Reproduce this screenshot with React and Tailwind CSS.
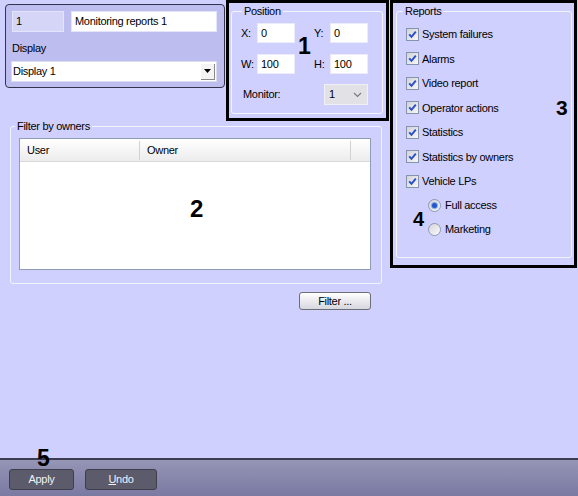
import React from 'react';

// XP-style check box with a blue tick
const CheckBox = () => (
  <span className="w-[13px] h-[13px] shrink-0 border border-[#8594ad] bg-linear-to-br from-[#d2d2da] to-[#f7f7f7] flex items-center justify-center">
    <svg width="9" height="9" viewBox="0 0 9 9">
      <path d="M1.2 4.3 L3.5 6.8 L7.8 1.6" fill="none" stroke="#2b4ec6" strokeWidth="1.9" />
    </svg>
  </span>
);

const Radio = ({ on }) => (
  <span className="w-[13px] h-[13px] shrink-0 rounded-full border border-[#8c9ab0] bg-linear-to-br from-[#d4d4dc] to-[#fbfbfb] flex items-center justify-center">
    {on && <span className="w-[5px] h-[5px] rounded-full bg-[#2256c9] shadow-[0_0_1px_1px_#7fa3e6]" />}
  </span>
);

const Field = ({ value, className = '' }) => (
  <div className={`h-[20px] bg-white border border-[#ececf8] pl-[3px] leading-[18px] ${className}`}>{value}</div>
);

const reports = [
  'System failures',
  'Alarms',
  'Video report',
  'Operator actions',
  'Statistics',
  'Statistics by owners',
  'Vehicle LPs',
];

export default function App() {
  return (
    <div className="relative w-[578px] h-[496px] overflow-hidden flex flex-col bg-[#d0d0fe] text-black text-[11px] tracking-[-0.3px] font-['Liberation_Sans',Arial,sans-serif]">
      <div className="flex-1 flex">
        {/* Left column */}
        <div className="w-[390px] flex flex-col">
          <div className="flex items-start h-[120px]">
            {/* Number / name / display panel */}
            <div className="ml-[5px] mt-[4px] w-[220px] h-[84px] rounded-[4px] border border-[#34344c] bg-[#bdbdf0] pl-[6px] pt-[6px]">
              <div className="flex gap-[7px]">
                <div className="w-[52px] h-[21px] bg-[#d5d5f7] border border-[#e4e4fa] pl-[3px] leading-[19px]">1</div>
                <div className="w-[146px] h-[21px] bg-white border border-[#e4e4fa] pl-[3px] leading-[19px]">Monitoring reports 1</div>
              </div>
              <div className="mt-[9px] leading-[14px]">Display</div>
              <div className="mt-[6px] -ml-[1px] w-[206px] h-[21px] bg-white border border-[#dcdcf0] flex items-center justify-between pl-[1px] pr-[1px]">
                <span>Display 1</span>
                <span className="w-[14px] h-[16px] bg-[#f4f4f4] border-r border-b border-[#8a8a8a] flex items-center justify-center">
                  <svg width="7" height="4" viewBox="0 0 7 4"><path d="M0 0 H7 L3.5 4 Z" fill="#000" /></svg>
                </span>
              </div>
            </div>

            {/* Position */}
            <div className="ml-[1px] w-[163px] h-[121px] border-[3px] border-black pl-[2px] pr-[3px] pt-[2px] pb-[4px]">
              <fieldset className="h-full border border-[#f4f4ff] rounded-[3px]">
                <legend className="ml-[10px] px-[2px] leading-[13px]">Position</legend>
                <div className="mt-[5px] flex items-center h-[20px] pl-[9px]">
                  <span className="w-[16px]">X:</span>
                  <Field value="0" className="w-[38px]" />
                  <span className="ml-[19px] w-[16px]">Y:</span>
                  <Field value="0" className="w-[38px]" />
                </div>
                <div className="mt-[11px] flex items-center h-[20px] pl-[9px]">
                  <span className="w-[16px]">W:</span>
                  <Field value="100" className="w-[38px]" />
                  <span className="ml-[19px] w-[16px]">H:</span>
                  <Field value="100" className="w-[38px]" />
                </div>
                <div className="mt-[10px] flex items-center h-[21px] pl-[11px]">
                  <span className="w-[81px]">Monitor:</span>
                  <div className="w-[44px] h-[21px] bg-[#e2e2e6] border border-[#f0f0f4] flex items-center justify-between pl-[4px] pr-[5px]">
                    <span>1</span>
                    <svg width="9" height="6" viewBox="0 0 9 6"><path d="M1 1 L4.5 4.5 L8 1" fill="none" stroke="#7a7a80" strokeWidth="1.2" /></svg>
                  </div>
                </div>
              </fieldset>
            </div>
          </div>

          {/* Filter by owners */}
          <fieldset className="ml-[10px] w-[372px] h-[164px] border border-[#f4f4ff] rounded-[3px]">
            <legend className="ml-[4px] px-[2px] leading-[13px]">Filter by owners</legend>
            <div className="mt-[5px] ml-[8px] w-[352px] h-[132px] bg-white border border-[#8e9cb6] flex flex-col">
              <div className="h-[23px] flex items-center border-b border-[#d8d8d8] bg-linear-to-b from-white to-[#ececec]">
                <span className="w-[119px] pl-[7px]">User</span>
                <span className="w-[1px] h-[19px] bg-[#d2d2d2]" />
                <span className="w-[210px] pl-[7px]">Owner</span>
                <span className="w-[1px] h-[19px] bg-[#d2d2d2]" />
              </div>
            </div>
          </fieldset>

          <div className="mt-[8px] flex justify-end pr-[19px]">
            <button className="w-[72px] h-[18px] rounded-[3px] border border-[#6e6e78] bg-linear-to-b from-white to-[#d6d6de] text-center leading-[16px]">
              Filter ...
            </button>
          </div>
        </div>

        {/* Reports */}
        <div className="w-[187px] h-[268px] border-[3px] border-black pl-[3px] pr-[2px] pt-[2px] pb-[7px]">
          <fieldset className="h-full border border-[#f4f4ff] rounded-[3px]">
            <legend className="ml-[6px] px-[2px] leading-[13px]">Reports</legend>
            <div className="mt-[4px] flex flex-col">
              {reports.map((r) => (
                <div key={r} className="h-[24.5px] flex items-center pl-[9px] gap-[3px]">
                  <CheckBox />
                  <span>{r}</span>
                </div>
              ))}
              <div className="h-[24px] flex items-center pl-[31px] gap-[4px]">
                <Radio on />
                <span>Full access</span>
              </div>
              <div className="h-[24px] flex items-center pl-[31px] gap-[4px]">
                <Radio />
                <span>Marketing</span>
              </div>
            </div>
          </fieldset>
        </div>
      </div>

      {/* Bottom bar */}
      <div className="h-[38px] border-t-2 border-[#3c3c52] bg-linear-to-b from-[#9595b6] to-[#7a7aa2] flex items-start pt-[9px] pl-[9px] gap-[11px]">
        <button className="w-[65px] h-[21px] rounded-[3px] border border-[#3e3e4c] bg-[#5b5b6b] text-[#f0f0f8] leading-[19px]">Apply</button>
        <button className="w-[72px] h-[21px] rounded-[3px] border border-[#3e3e4c] bg-[#5b5b6b] text-[#f0f0f8] leading-[19px]">
          <span className="underline">U</span>ndo
        </button>
      </div>

      {/* Callout numbers */}
      <span className="absolute left-[298px] top-[35px] text-[23px] leading-none font-bold tracking-normal">1</span>
      <span className="absolute left-[190px] top-[197px] text-[24px] leading-none font-bold tracking-normal">2</span>
      <span className="absolute left-[556px] top-[97px] text-[21px] leading-none font-bold tracking-normal">3</span>
      <span className="absolute left-[413px] top-[209px] text-[20px] leading-none font-bold tracking-normal">4</span>
      <span className="absolute left-[37px] top-[447px] text-[23px] leading-none font-bold tracking-normal">5</span>
    </div>
  );
}
